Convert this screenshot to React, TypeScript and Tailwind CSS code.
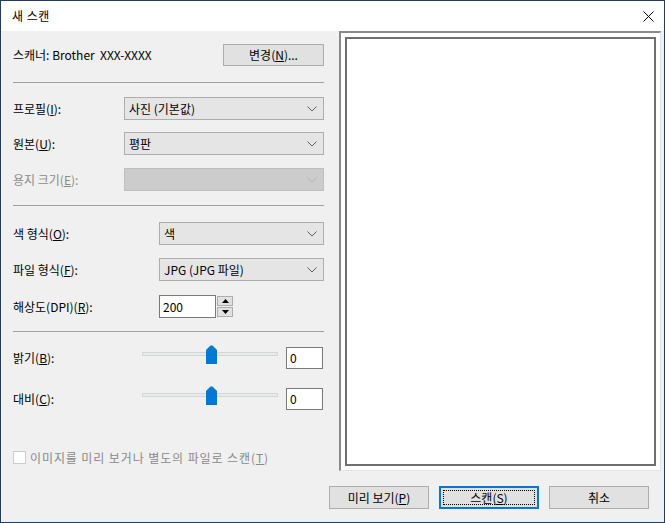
import React from "react";

const FONT = "font-['Noto_Sans_CJK_KR','Noto_Sans',sans-serif]";

function Chevron({ disabled }: { disabled?: boolean }) {
  return (
    <svg width="10" height="6" viewBox="0 0 10 6" className="shrink-0">
      <polyline
        points="0.5,0.5 5,5 9.5,0.5"
        fill="none"
        stroke={disabled ? "#b5b5b5" : "#606060"}
        strokeWidth="1"
      />
    </svg>
  );
}

function Combo({
  value,
  width,
  disabled,
}: {
  value?: string;
  width: string;
  disabled?: boolean;
}) {
  return (
    <div
      className={`${width} h-[23px] flex items-center justify-between pl-[4px] pr-[6px] border ${
        disabled ? "bg-[#cccccc] border-[#bfbfbf]" : "bg-[#e5e5e5] border-[#adadad]"
      }`}
    >
      <span className="text-[12px] text-black leading-none">{value}</span>
      <Chevron disabled={disabled} />
    </div>
  );
}

function Label({
  children,
  disabled,
  width,
}: {
  children: React.ReactNode;
  disabled?: boolean;
  width: string;
}) {
  return (
    <div
      className={`${width} shrink-0 text-[12px] leading-none ${
        disabled ? "text-[#8a8a8a]" : "text-black"
      }`}
    >
      {children}
    </div>
  );
}

function Thumb() {
  return (
    <svg width="11" height="19" viewBox="0 0 11 19" className="absolute left-[63px] top-[-8px]">
      <path d="M0 5 L4.5 0.5 H6.5 L11 5 V19 H0 Z" fill="#0078d7" />
    </svg>
  );
}

function Slider({ label }: { label: React.ReactNode }) {
  return (
    <div className="flex items-center h-[23px]">
      <Label width="w-[129px]">{label}</Label>
      <div className="relative w-[136px] h-[4px] -mt-[7px] bg-[#e7eaea] border border-[#d6d6d6]">
        <Thumb />
      </div>
      <div className="ml-[8px] w-[37px] h-[22px] bg-white border border-[#7a7a7a] flex items-center pl-[3px] text-[12px] leading-none text-black">
        0
      </div>
    </div>
  );
}

function Spinner() {
  return (
    <div className="flex items-center">
      <div className="w-[57px] h-[23px] bg-white border border-[#7a7a7a] flex items-center pl-[3px] text-[12px] leading-none text-black">
        200
      </div>
      <div className="ml-[1px] flex flex-col gap-[1px]">
        <div className="w-[16px] h-[10px] bg-[#e1e1e1] border border-[#adadad] flex items-center justify-center">
          <svg width="7" height="4" viewBox="0 0 7 4">
            <path d="M0 4 L3.5 0 L7 4 Z" fill="#000" />
          </svg>
        </div>
        <div className="w-[16px] h-[10px] bg-[#e1e1e1] border border-[#adadad] flex items-center justify-center">
          <svg width="7" height="4" viewBox="0 0 7 4">
            <path d="M0 0 L3.5 4 L7 0 Z" fill="#000" />
          </svg>
        </div>
      </div>
    </div>
  );
}

function Sep() {
  return <div className="h-px bg-[#a0a0a0]" />;
}

function Button({
  children,
  primary,
}: {
  children: React.ReactNode;
  primary?: boolean;
}) {
  return (
    <div
      className={`w-[100px] h-[23px] flex items-center justify-center text-[12px] leading-none text-black bg-[#e1e1e1] ${
        primary ? "border-2 border-[#0078d7]" : "border border-[#adadad]"
      }`}
    >
      {primary ? (
        <div className="w-[92px] h-[15px] border border-dotted border-black flex items-center justify-center">
          {children}
        </div>
      ) : (
        children
      )}
    </div>
  );
}

export default function App() {
  return (
    <div className={`${FONT} w-[665px] h-[523px] border border-[#1d3d63] bg-[#f0f0f0] flex flex-col select-none`}>
      {/* title bar */}
      <div className="h-[30px] bg-white flex items-center justify-between pl-[11px] pr-[10px] shrink-0">
        <span className="text-[12px] text-black leading-none tracking-[0.5px]">새 스캔</span>
        <svg width="11" height="11" viewBox="0 0 11 11">
          <path d="M0.5 0.5 L10.5 10.5 M10.5 0.5 L0.5 10.5" stroke="#000" strokeWidth="1" />
        </svg>
      </div>

      {/* body */}
      <div className="flex h-[440px] shrink-0">
        <div className="w-[338px] shrink-0 pl-[12px] pr-[15px] flex flex-col">
          <div className="mt-[13px] h-[22px] flex items-center justify-between">
            <span className="text-[12px] leading-none text-black">스캐너: Brother&nbsp; XXX-XXXX</span>
            <div className="w-[101px] h-[22px] flex items-center justify-center bg-[#e1e1e1] border border-[#adadad] text-[12px] leading-none text-black">
              변경(<u>N</u>)...
            </div>
          </div>

          <div className="mt-[16px]">
            <Sep />
          </div>

          <div className="mt-[14px] flex items-center">
            <Label width="w-[111px]">
              프로필(<u>I</u>):
            </Label>
            <Combo value="사진 (기본값)" width="w-[200px]" />
          </div>
          <div className="mt-[12px] flex items-center">
            <Label width="w-[111px]">
              원본(<u>U</u>):
            </Label>
            <Combo value="평판" width="w-[200px]" />
          </div>
          <div className="mt-[13px] flex items-center">
            <Label width="w-[111px]" disabled>
              용지 크기(<u>E</u>):
            </Label>
            <Combo width="w-[200px]" disabled />
          </div>

          <div className="mt-[14px]">
            <Sep />
          </div>

          <div className="mt-[16px] flex items-center">
            <Label width="w-[146px]">
              색 형식(<u>O</u>):
            </Label>
            <Combo value="색" width="w-[165px]" />
          </div>
          <div className="mt-[13px] flex items-center">
            <Label width="w-[146px]">
              파일 형식(<u>F</u>):
            </Label>
            <Combo value="JPG (JPG 파일)" width="w-[165px]" />
          </div>
          <div className="mt-[14px] flex items-center">
            <Label width="w-[146px]">
              해상도(DPI)(<u>R</u>):
            </Label>
            <Spinner />
          </div>

          <div className="mt-[13px]">
            <Sep />
          </div>

          <div className="mt-[14px]">
            <Slider
              label={
                <>
                  밝기(<u>B</u>):
                </>
              }
            />
          </div>
          <div className="mt-[18px]">
            <Slider
              label={
                <>
                  대비(<u>C</u>):
                </>
              }
            />
          </div>

          <div className="mt-[41px] flex items-center gap-[4px]">
            <div className="w-[13px] h-[13px] bg-white border border-[#cccccc]" />
            <span className="text-[12px] leading-none text-[#8a8a8a] tracking-[0.9px]">
              이미지를 미리 보거나 별도의 파일로 스캔(<u>T</u>)
            </span>
          </div>
        </div>

        {/* preview pane */}
        <div className="w-[322px] h-[440px] shrink-0 border-t-2 border-l-2 border-r border-b border-t-[#8a8a8a] border-l-[#8a8a8a] border-r-[#e3e3e3] border-b-[#e3e3e3] bg-white p-[4px]">
          <div className="w-full h-full bg-white border-2 border-[#6f6f6f]" />
        </div>
      </div>

      {/* buttons */}
      <div className="mt-[15px] flex justify-end gap-[10px] pr-[15px]">
        <Button>
          미리 보기(<u>P</u>)
        </Button>
        <Button primary>
          스캔(<u>S</u>)
        </Button>
        <Button>취소</Button>
      </div>
    </div>
  );
}
